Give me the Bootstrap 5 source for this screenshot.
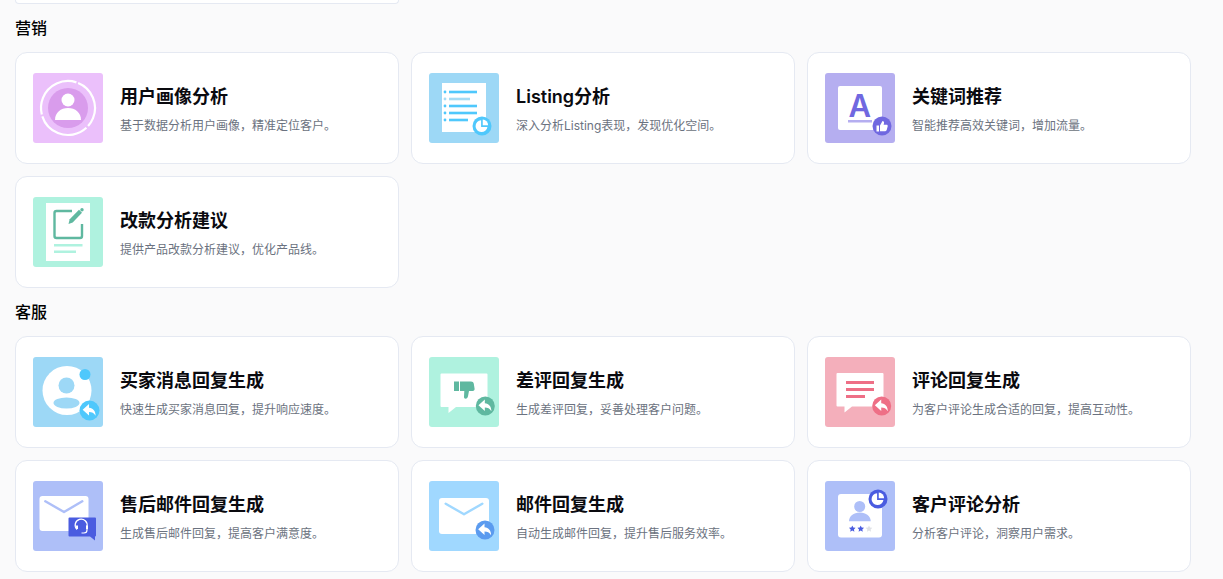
<!DOCTYPE html>
<html lang="zh-CN">
<head>
    <meta charset="UTF-8">
    <title>工具</title>
    <link href="https://cdn.jsdelivr.net/npm/bootstrap@5.3.0/dist/css/bootstrap.min.css" rel="stylesheet">
    <style>
        html, body { height: 579px; overflow: hidden; }
        body {
            background-color: #fafafb;
            font-family: Inter, "Noto Sans CJK SC", sans-serif;
        }
        .page-wrap { width: 1191px; padding-left: 15px; }
        .card-stub {
            width: 384px;
            height: 4px;
            background: #fff;
            border: 1px solid #e5e9f2;
            border-top: 0;
            border-radius: 0 0 12px 12px;
        }
        .group-title {
            font-size: 16px;
            font-weight: 500;
            line-height: 24px;
            color: #000;
            margin: 12px 0;
        }
        .tool-row { --bs-gutter-x: 12px; --bs-gutter-y: 12px; }
        .tool-card {
            height: 112px;
            border: 1px solid #e5e9f2;
            border-radius: 12px;
        }
        .tool-card .card-body { padding: 0 17px; gap: 17px; }
        .tool-icon { width: 70px; height: 70px; flex: none; display: block; }
        .tool-name {
            font-size: 18px;
            font-weight: 600;
            line-height: 28px;
            color: #0a0a0f;
            margin: 2px 0 5px;
        }
        .tool-desc {
            font-size: 12px;
            line-height: 20px;
            color: #6b7280;
            margin: 0;
        }
    </style>
</head>
<body>
    <svg width="0" height="0" class="position-absolute">
        <defs>
            <symbol id="reply-arrow" viewBox="0 0 20 20">
                <path fill="#fff" d="M9.5 3.2 2.800 9.200l6.700 6v-3.700c3 0 5.200.9 6.900 4 .2-4.800-2.600-8.300-6.900-8.500z"/>
            </symbol>
            <symbol id="pie-slice" viewBox="0 0 20 20">
                <path fill="#fff" d="M9 3.600a6.600 6.600 0 1 0 7 7.400H9z"/>
                <path fill="#fff" d="M10.800 2.800a6.600 6.600 0 0 1 6 6.400h-6z"/>
            </symbol>
            <symbol id="star" viewBox="0 0 10 10">
                <polygon points="5,0.3 6.400,3.400 9.800,3.800 7.300,6 8,9.400 5,7.700 2,9.400 2.700,6 .2,3.800 3.600,3.400"/>
            </symbol>
        </defs>
    </svg>

    <div class="page-wrap">
        <div class="card-stub"></div>

        <h2 class="group-title">营销</h2>
        <div class="row tool-row">
            <div class="col-4">
                <div class="card tool-card">
                    <div class="card-body d-flex align-items-center">
                        <svg class="tool-icon" viewBox="0 0 70 70">
                            <rect width="70" height="70" rx="3" fill="#ebc0fb"/>
                            <circle cx="35" cy="35" r="20" fill="#d99cec"/>
                            <circle cx="35" cy="35" r="27" fill="none" stroke="#fff" stroke-width="2.200" pathLength="360" stroke-dasharray="110 5 115 4 122 4" transform="rotate(-68 35 35)"/>
                            <circle cx="35" cy="27" r="6.500" fill="#fff"/>
                            <path fill="#fff" d="M22 47c0-7.500 5.800-12 13-12s13 4.500 13 12z"/>
                        </svg>
                        <div>
                            <h3 class="tool-name">用户画像分析</h3>
                            <p class="tool-desc">基于数据分析用户画像，精准定位客户。</p>
                        </div>
                    </div>
                </div>
            </div>
            <div class="col-4">
                <div class="card tool-card">
                    <div class="card-body d-flex align-items-center">
                        <svg class="tool-icon" viewBox="0 0 70 70">
                            <rect width="70" height="70" rx="3" fill="#9dd8f6"/>
                            <rect x="13" y="10" width="44" height="49" fill="#fff"/>
                            <g fill="#4fc8fc">
                                <circle cx="16" cy="19" r="1.400"/>
                                <circle cx="16" cy="33" r="1.400"/>
                                <circle cx="16" cy="40" r="1.400"/>
                                <circle cx="16" cy="47" r="1.400"/>
                                <rect x="20" y="17.700" width="28" height="2.600"/>
                                <rect x="20" y="31.700" width="28" height="2.600"/>
                                <rect x="20" y="38.700" width="28" height="2.600"/>
                                <rect x="20" y="45.700" width="19" height="2.600"/>
                            </g>
                            <circle cx="16" cy="26" r="1.400" fill="#a5dcf5"/>
                            <rect x="20" y="24.700" width="21" height="2.600" fill="#a5dcf5"/>
                            <circle cx="53" cy="53" r="9.500" fill="#4fc8fc"/>
                            <use href="#pie-slice" x="44" y="44" width="18" height="18"/>
                        </svg>
                        <div>
                            <h3 class="tool-name">Listing分析</h3>
                            <p class="tool-desc">深入分析Listing表现，发现优化空间。</p>
                        </div>
                    </div>
                </div>
            </div>
            <div class="col-4">
                <div class="card tool-card">
                    <div class="card-body d-flex align-items-center">
                        <svg class="tool-icon" viewBox="0 0 70 70">
                            <rect width="70" height="70" rx="3" fill="#b5aef0"/>
                            <rect x="13" y="13" width="44" height="44" rx="2" fill="#fff"/>
                            <text x="34.800" y="44" text-anchor="middle" font-family="Inter, sans-serif" font-size="31" font-weight="600" fill="#7068e0">A</text>
                            <rect x="23" y="47" width="24" height="2.500" fill="#b5aef0"/>
                            <circle cx="57" cy="53" r="9.500" fill="#7068e0"/>
                            <path fill="#fff" d="M51.500 52.500h2.500v6h-2.500zM55 52.500l2.500-4.500c1.200 0 1.800 1 1.500 2.200l-.4 1.600h3c.8 0 1.300.7 1.100 1.400l-1 3.900c-.2.700-.7 1.100-1.400 1.100H55z"/>
                        </svg>
                        <div>
                            <h3 class="tool-name">关键词推荐</h3>
                            <p class="tool-desc">智能推荐高效关键词，增加流量。</p>
                        </div>
                    </div>
                </div>
            </div>
            <div class="col-4">
                <div class="card tool-card">
                    <div class="card-body d-flex align-items-center">
                        <svg class="tool-icon" viewBox="0 0 70 70">
                            <rect width="70" height="70" rx="3" fill="#aff2df"/>
                            <rect x="13" y="6" width="44" height="58" fill="#fff"/>
                            <path fill="none" stroke="#5fb8a0" stroke-width="2.400" stroke-linejoin="round" d="M39 14H23.500a2 2 0 0 0-2 2v23a2 2 0 0 0 2 2H47a2 2 0 0 0 2-2V27"/>
                            <path fill="#5fb8a0" d="M35.500 27l1.200-4.800 9.300-9.400 3 3-9.300 9.600z"/>
                            <circle cx="49" cy="12.700" r="1.700" fill="#5fb8a0"/>
                            <rect x="21" y="47" width="28.500" height="2.500" fill="#aff2df"/>
                            <rect x="21" y="53.500" width="22" height="2.500" fill="#aff2df"/>
                        </svg>
                        <div>
                            <h3 class="tool-name">改款分析建议</h3>
                            <p class="tool-desc">提供产品改款分析建议，优化产品线。</p>
                        </div>
                    </div>
                </div>
            </div>
        </div>

        <h2 class="group-title">客服</h2>
        <div class="row tool-row">
            <div class="col-4">
                <div class="card tool-card">
                    <div class="card-body d-flex align-items-center">
                        <svg class="tool-icon" viewBox="0 0 70 70">
                            <rect width="70" height="70" rx="3" fill="#9dd8f6"/>
                            <circle cx="34" cy="33.500" r="24.500" fill="#fff"/>
                            <circle cx="33.500" cy="28.500" r="8" fill="#9dd8f6"/>
                            <ellipse cx="33.500" cy="46" rx="13" ry="5.500" fill="#9dd8f6"/>
                            <circle cx="52" cy="17.500" r="5.500" fill="#4fc8fc"/>
                            <circle cx="56.500" cy="53.500" r="10" fill="#4fc8fc"/>
                            <use href="#reply-arrow" x="47" y="44" width="19" height="19"/>
                        </svg>
                        <div>
                            <h3 class="tool-name">买家消息回复生成</h3>
                            <p class="tool-desc">快速生成买家消息回复，提升响应速度。</p>
                        </div>
                    </div>
                </div>
            </div>
            <div class="col-4">
                <div class="card tool-card">
                    <div class="card-body d-flex align-items-center">
                        <svg class="tool-icon" viewBox="0 0 70 70">
                            <rect width="70" height="70" rx="3" fill="#aff2df"/>
                            <path fill="#fff" d="M12.500 16.500h45a1 1 0 0 1 1 1v31.500a1 1 0 0 1-1 1H27l-7.500 6v-6h-7a1 1 0 0 1-1-1V17.500a1 1 0 0 1 1-1z"/>
                            <rect x="25" y="24.500" width="5" height="9.500" fill="#5fb8a0"/>
                            <path fill="#5fb8a0" d="M31 24.500h11c1.500 0 2.500.8 2.800 2.200l.8 5c.2 1.200-.6 2.300-1.800 2.300H40l-1 5.200c-.3 1.500-1.200 2.500-2.300 2.500s-1.800-.8-1.700-2l.3-5.700H31z"/>
                            <circle cx="56.300" cy="49" r="9.500" fill="#5fb8a0"/>
                            <use href="#reply-arrow" x="46.800" y="39.500" width="19" height="19"/>
                        </svg>
                        <div>
                            <h3 class="tool-name">差评回复生成</h3>
                            <p class="tool-desc">生成差评回复，妥善处理客户问题。</p>
                        </div>
                    </div>
                </div>
            </div>
            <div class="col-4">
                <div class="card tool-card">
                    <div class="card-body d-flex align-items-center">
                        <svg class="tool-icon" viewBox="0 0 70 70">
                            <rect width="70" height="70" rx="3" fill="#f4afbb"/>
                            <path fill="#fff" d="M12.500 16h45a1 1 0 0 1 1 1v31.500a1 1 0 0 1-1 1H27l-7.500 6v-6h-7a1 1 0 0 1-1-1V17a1 1 0 0 1 1-1z"/>
                            <rect x="21" y="24" width="28" height="3" fill="#ee6f86"/>
                            <rect x="21" y="31" width="28" height="3" fill="#ee6f86"/>
                            <rect x="21" y="38" width="19" height="3" fill="#ee6f86"/>
                            <circle cx="56.700" cy="49" r="9.500" fill="#ee6f86"/>
                            <use href="#reply-arrow" x="47.200" y="39.500" width="19" height="19"/>
                        </svg>
                        <div>
                            <h3 class="tool-name">评论回复生成</h3>
                            <p class="tool-desc">为客户评论生成合适的回复，提高互动性。</p>
                        </div>
                    </div>
                </div>
            </div>
            <div class="col-4">
                <div class="card tool-card">
                    <div class="card-body d-flex align-items-center">
                        <svg class="tool-icon" viewBox="0 0 70 70">
                            <rect width="70" height="70" rx="3" fill="#aebff8"/>
                            <rect x="6.500" y="15" width="49" height="35" rx="3" fill="#fff"/>
                            <path fill="none" stroke="#aebff8" stroke-width="2.400" stroke-linecap="round" stroke-linejoin="round" d="M12.300 20.300 31 31l18.300-10.700"/>
                            <path fill="#4a5ce0" d="M36.500 36.500h25.500a1 1 0 0 1 1 1v17a1 1 0 0 1-1 1v4l-5-4H36.500a1 1 0 0 1-1-1v-17a1 1 0 0 1 1-1z"/>
                            <path fill="none" stroke="#fff" stroke-width="1.200" d="M44 48.500a6 6 0 1 1 10-3M54 46v3a3 3 0 0 1-3 3h-2.500"/>
                            <rect x="53" y="44.500" width="2" height="3.500" fill="#fff"/>
                            <rect x="43" y="44.500" width="2" height="3.500" fill="#fff"/>
                        </svg>
                        <div>
                            <h3 class="tool-name">售后邮件回复生成</h3>
                            <p class="tool-desc">生成售后邮件回复，提高客户满意度。</p>
                        </div>
                    </div>
                </div>
            </div>
            <div class="col-4">
                <div class="card tool-card">
                    <div class="card-body d-flex align-items-center">
                        <svg class="tool-icon" viewBox="0 0 70 70">
                            <rect width="70" height="70" rx="3" fill="#a0d8ff"/>
                            <rect x="10" y="17" width="50" height="36" rx="3" fill="#fff"/>
                            <path fill="none" stroke="#a0d8ff" stroke-width="2.400" stroke-linecap="round" stroke-linejoin="round" d="M16.700 22.700 35 33.300l18.300-10.600"/>
                            <circle cx="56" cy="49" r="9.500" fill="#5b9bef"/>
                            <use href="#reply-arrow" x="46.500" y="39.500" width="19" height="19"/>
                        </svg>
                        <div>
                            <h3 class="tool-name">邮件回复生成</h3>
                            <p class="tool-desc">自动生成邮件回复，提升售后服务效率。</p>
                        </div>
                    </div>
                </div>
            </div>
            <div class="col-4">
                <div class="card tool-card">
                    <div class="card-body d-flex align-items-center">
                        <svg class="tool-icon" viewBox="0 0 70 70">
                            <rect width="70" height="70" rx="3" fill="#aebff8"/>
                            <rect x="13" y="13" width="44" height="43.500" rx="3" fill="#fff"/>
                            <circle cx="34.700" cy="25.500" r="5.500" fill="#aebff8"/>
                            <path fill="#aebff8" d="M24 40.300c0-5.200 4.500-8.800 10.800-8.800s10.900 3.600 10.900 8.800z"/>
                            <use href="#star" x="23.800" y="44.200" width="7" height="7" fill="#4a5ce0"/>
                            <use href="#star" x="32.200" y="44.200" width="7" height="7" fill="#4a5ce0"/>
                            <use href="#star" x="40.500" y="44.200" width="7" height="7" fill="#dfe1e6"/>
                            <circle cx="53" cy="18" r="9.500" fill="#4a5ce0"/>
                            <use href="#pie-slice" x="44" y="9" width="18" height="18"/>
                        </svg>
                        <div>
                            <h3 class="tool-name">客户评论分析</h3>
                            <p class="tool-desc">分析客户评论，洞察用户需求。</p>
                        </div>
                    </div>
                </div>
            </div>
        </div>
    </div>

    <script src="https://cdn.jsdelivr.net/npm/bootstrap@5.3.0/dist/js/bootstrap.bundle.min.js"></script>
</body>
</html>
